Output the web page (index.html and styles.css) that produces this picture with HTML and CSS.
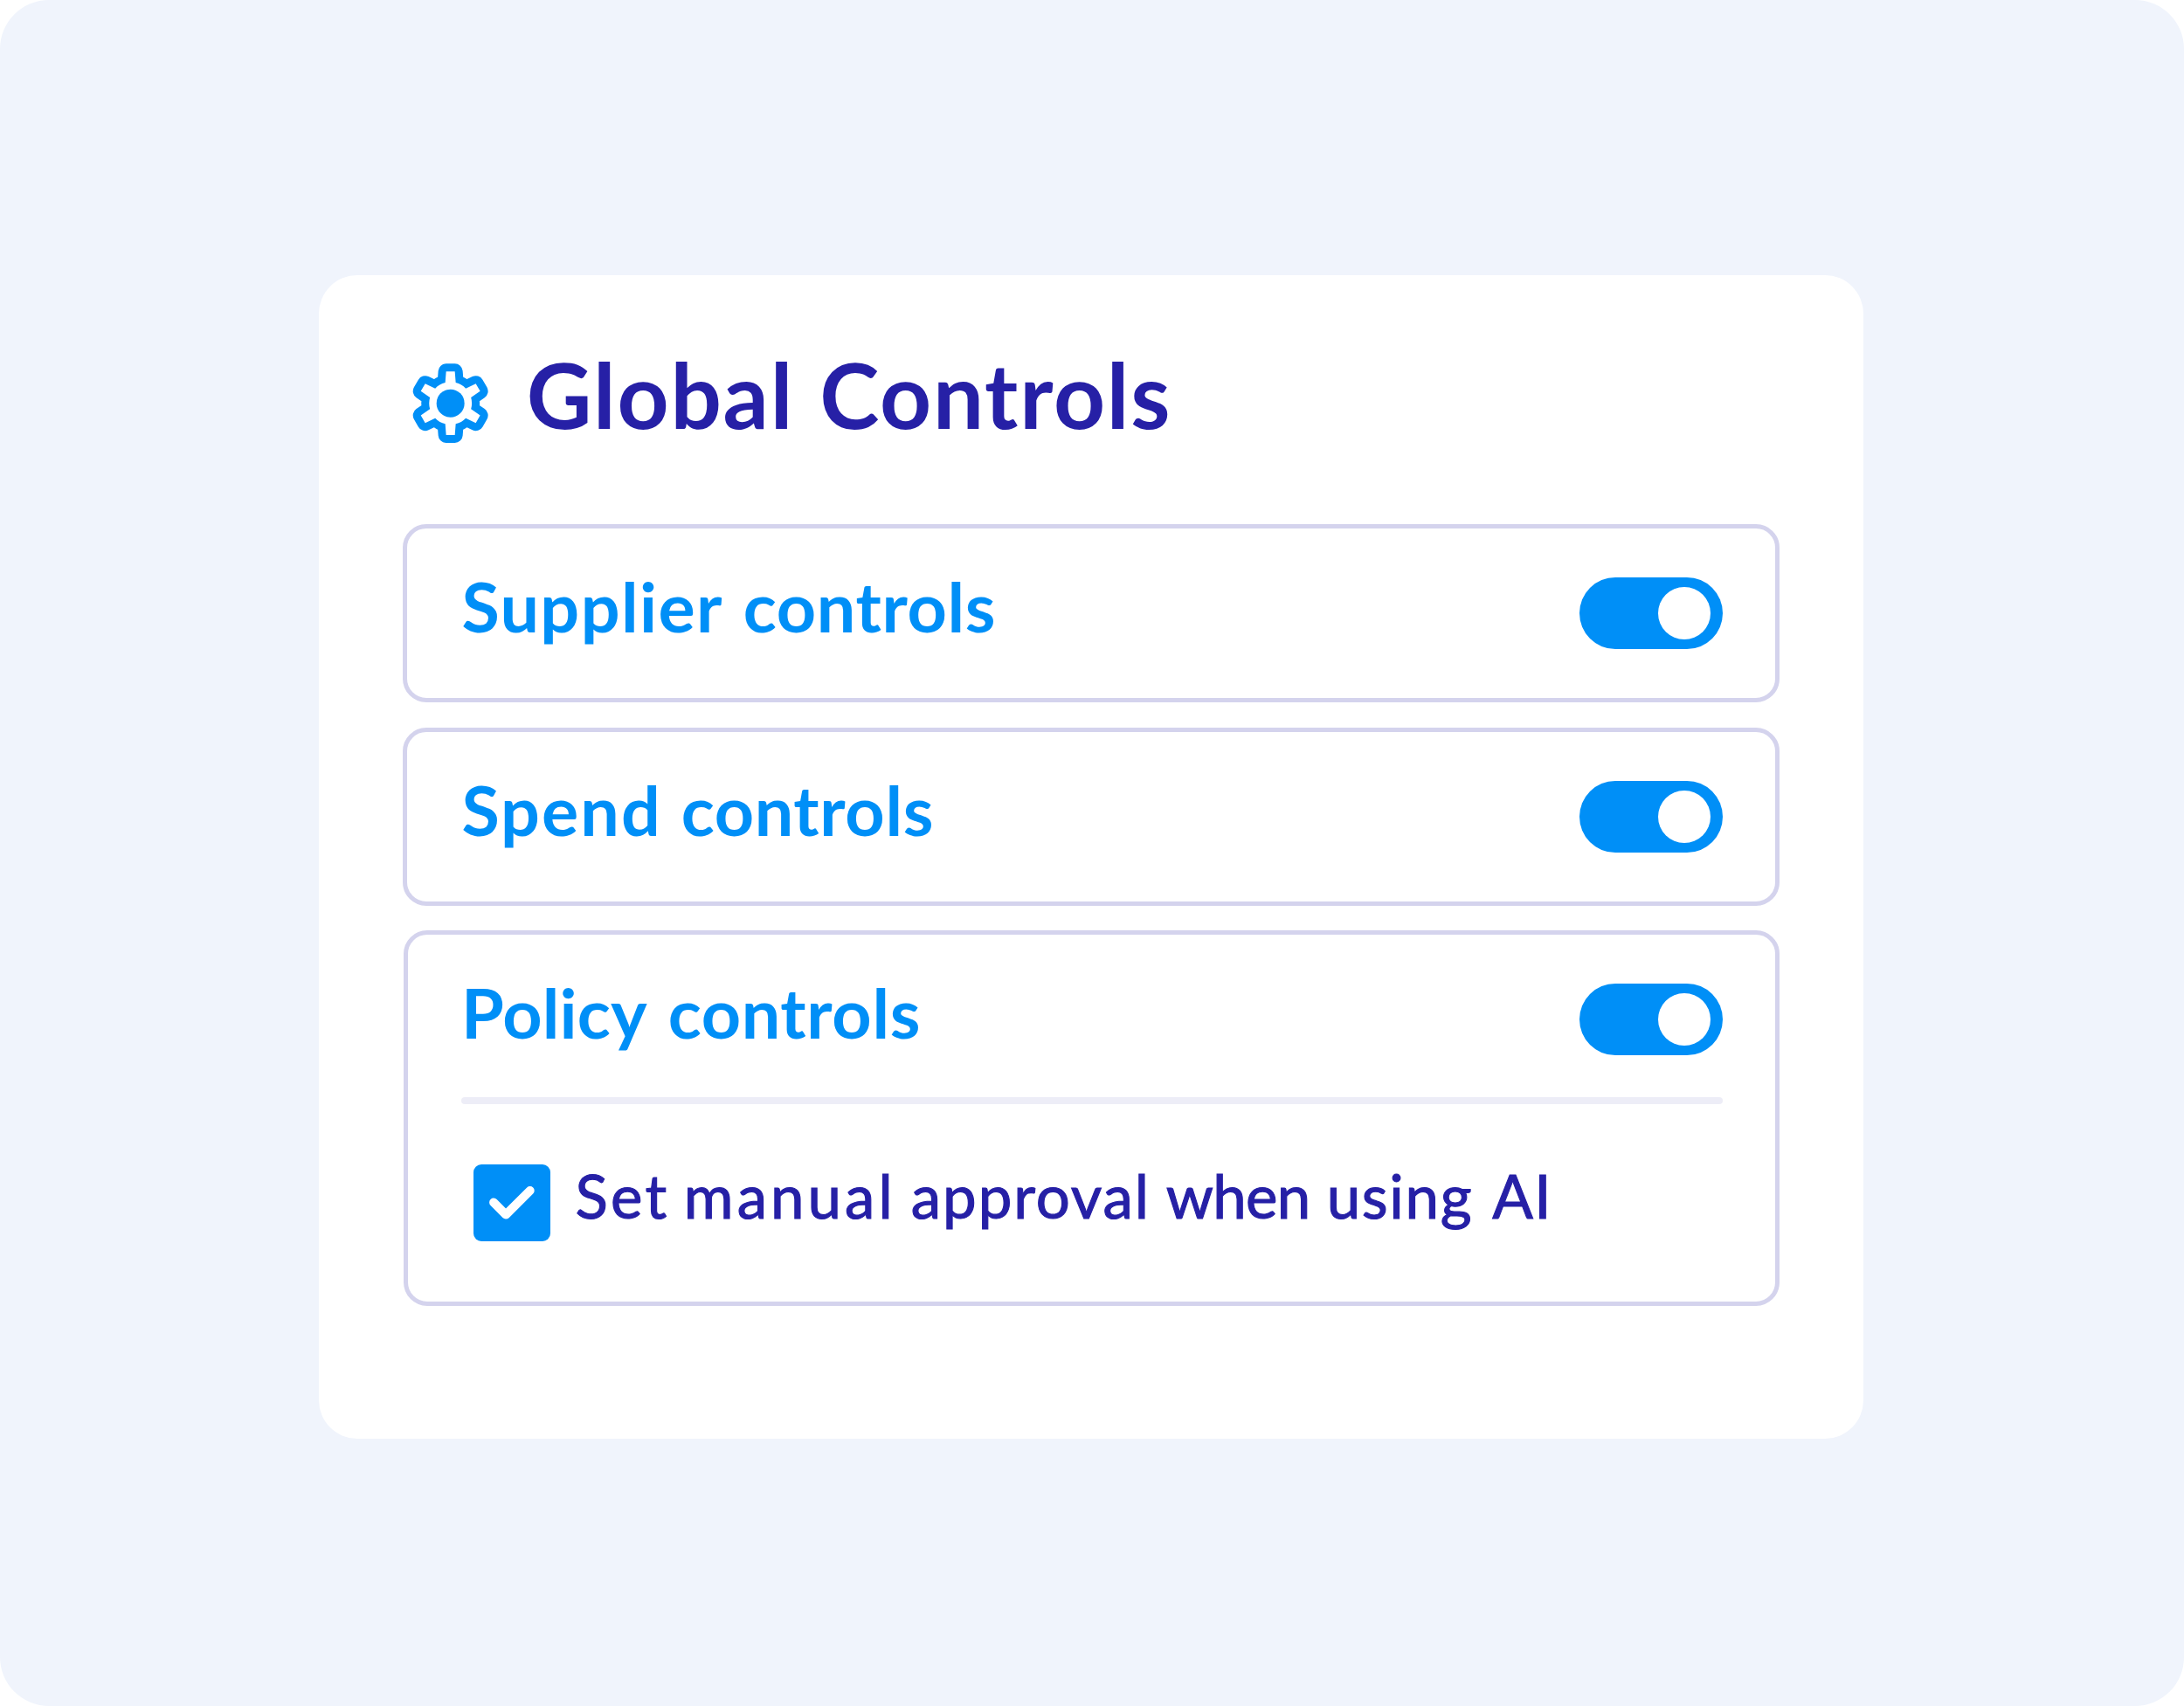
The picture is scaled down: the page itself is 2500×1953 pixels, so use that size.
FILE: index.html
```html
<!DOCTYPE html>
<html lang="en">
<head>
<meta charset="utf-8">
<title>Global Controls</title>
<link rel="stylesheet" href="styles.css">
</head>
<body>
<main class="stage">
  <section class="card">
    <header class="card-head">
      <svg class="gear" viewBox="-140 -140 280 280" aria-hidden="true">
        <path class="gear-ring" d="M-18-71L-15-109H15L18-71A73.3 73.3 0 0 1 52.5-51.1L86.9-67.5L101.9-41.5L70.5-19.9A73.3 73.3 0 0 1 70.5 19.9L101.9 41.5L86.9 67.5L52.5 51.1A73.3 73.3 0 0 1 18 71L15 109H-15L-18 71A73.3 73.3 0 0 1-52.5 51.1L-86.9 67.5L-101.9 41.5L-70.5 19.9A73.3 73.3 0 0 1-70.5-19.9L-101.9-41.5L-86.9-67.5L-52.5-51.1A73.3 73.3 0 0 1-18-71Z"/>
        <circle class="gear-hub" r="48"/>
      </svg>
      <h1 class="title">Global Controls</h1>
    </header>
    <div class="panels">
      <div class="panel">
        <div class="row">
          <h2 class="label"><span class="w-supplier">Supplier</span> <span>controls</span></h2>
          <span class="toggle"><span class="knob"></span></span>
        </div>
      </div>
      <div class="panel">
        <div class="row">
          <h2 class="label"><span class="w-spend">Spend</span> <span>controls</span></h2>
          <span class="toggle"><span class="knob"></span></span>
        </div>
      </div>
      <div class="panel panel-open">
        <div class="row">
          <h2 class="label"><span class="w-policy">Policy</span> <span>controls</span></h2>
          <span class="toggle"><span class="knob"></span></span>
        </div>
        <div class="divider"></div>
        <div class="option">
          <svg class="checkbox" viewBox="0 0 88 88" aria-hidden="true">
            <rect width="88" height="88" rx="9"/>
            <path d="M23.1 43.5L37 57.6L64.7 30"/>
          </svg>
          <p class="option-text"><span class="w-set">Set</span> <span class="w-manual">manual</span> <span class="w-approval">approval</span> <span class="w-when">when</span> <span class="w-using">using</span> <span class="w-ai">AI</span></p>
        </div>
      </div>
    </div>
  </section>
</main>
</body>
</html>
```
FILE: styles.css
```css
:root {
  --blue: #008ff7;
  --indigo: #2620a6;
  --line: #d4d3ed;
}

* { box-sizing: border-box; }

body {
  margin: 0;
  background: #fff;
  font-family: Lato, "Open Sans", sans-serif;
}

.stage {
  width: 2500px;
  height: 1953px;
  padding: 315px 367px 0 365.3px;
  border-radius: 56px;
  background: #f0f4fc;
}

.card {
  height: 1332.3px;
  padding: 73px 95.6px 0;
  border-radius: 44px;
  background: #fff;
}

.card-head {
  display: flex;
  align-items: flex-start;
  height: 124px;
}

.gear {
  flex: none;
  width: 93.33px;
  height: 93.33px;
  margin: 26.6px 40.7px 0 7.8px;
}

.gear-ring {
  fill: #fff;
  stroke: var(--blue);
  stroke-width: 54;
  stroke-linejoin: round;
  paint-order: stroke;
}

.gear-hub { fill: var(--blue); }

.title {
  margin: 0;
  padding-top: 1px;
  font-size: 103px;
  font-weight: 700;
  line-height: 124px;
  letter-spacing: 1.78px;
  word-spacing: 2.3px;
  white-space: nowrap;
  color: var(--indigo);
}

.panels {
  display: flex;
  flex-direction: column;
  gap: 28.5px;
  margin-top: 88.3px;
}

.panel {
  height: 204px;
  padding: 40px 60px 0 62.5px;
  border: 5px solid var(--line);
  border-radius: 27px;
}

.panel-open {
  height: 430px;
  margin-left: 1.6px;
  padding-left: 60.5px;
}

.row {
  display: flex;
  justify-content: space-between;
  align-items: flex-start;
  height: 95px;
}

.label {
  margin: 0;
  padding-top: 1px;
  font-size: 79px;
  font-weight: 700;
  line-height: 95px;
  white-space: nowrap;
  color: var(--blue);
}

.label span { letter-spacing: 0.65px; }
.label .w-supplier { letter-spacing: 1.4px; margin-right: 3.6px; }
.label .w-spend { letter-spacing: 2.1px; margin-right: 2.5px; }
.label .w-policy { letter-spacing: 0.16px; margin-right: 4.6px; }

.toggle {
  display: flex;
  justify-content: flex-end;
  align-items: center;
  width: 164px;
  height: 82px;
  margin-top: 16px;
  padding-right: 14px;
  border-radius: 41px;
  background: var(--blue);
}

.knob {
  width: 60px;
  height: 60px;
  border-radius: 50%;
  background: #fff;
}

.divider {
  height: 8.5px;
  margin-top: 50.4px;
  border-radius: 4px;
  background: #ededf7;
}

.option {
  display: flex;
  align-items: flex-start;
  gap: 28px;
  margin-top: 62.3px;
  padding-left: 14.5px;
}

.checkbox {
  flex: none;
  width: 88px;
  height: 88px;
  margin-top: 6.3px;
}

.checkbox rect { fill: var(--blue); }

.checkbox path {
  fill: none;
  stroke: #fff;
  stroke-width: 10;
  stroke-linecap: round;
  stroke-linejoin: round;
}

.option-text {
  margin: 0;
  padding-top: 1px;
  font-size: 69px;
  line-height: 83px;
  white-space: nowrap;
  color: var(--indigo);
  -webkit-text-stroke: 1.1px var(--indigo);
}

.w-set { letter-spacing: 3.3px; margin-right: -1.4px; }
.w-manual { letter-spacing: 4.06px; margin-right: -0.6px; }
.w-approval { letter-spacing: 1.9px; }
.w-when { letter-spacing: -0.71px; margin-right: 1.5px; }
.w-using { letter-spacing: 1.65px; margin-right: 4.3px; }
.w-ai { letter-spacing: 1.5px; }
```
